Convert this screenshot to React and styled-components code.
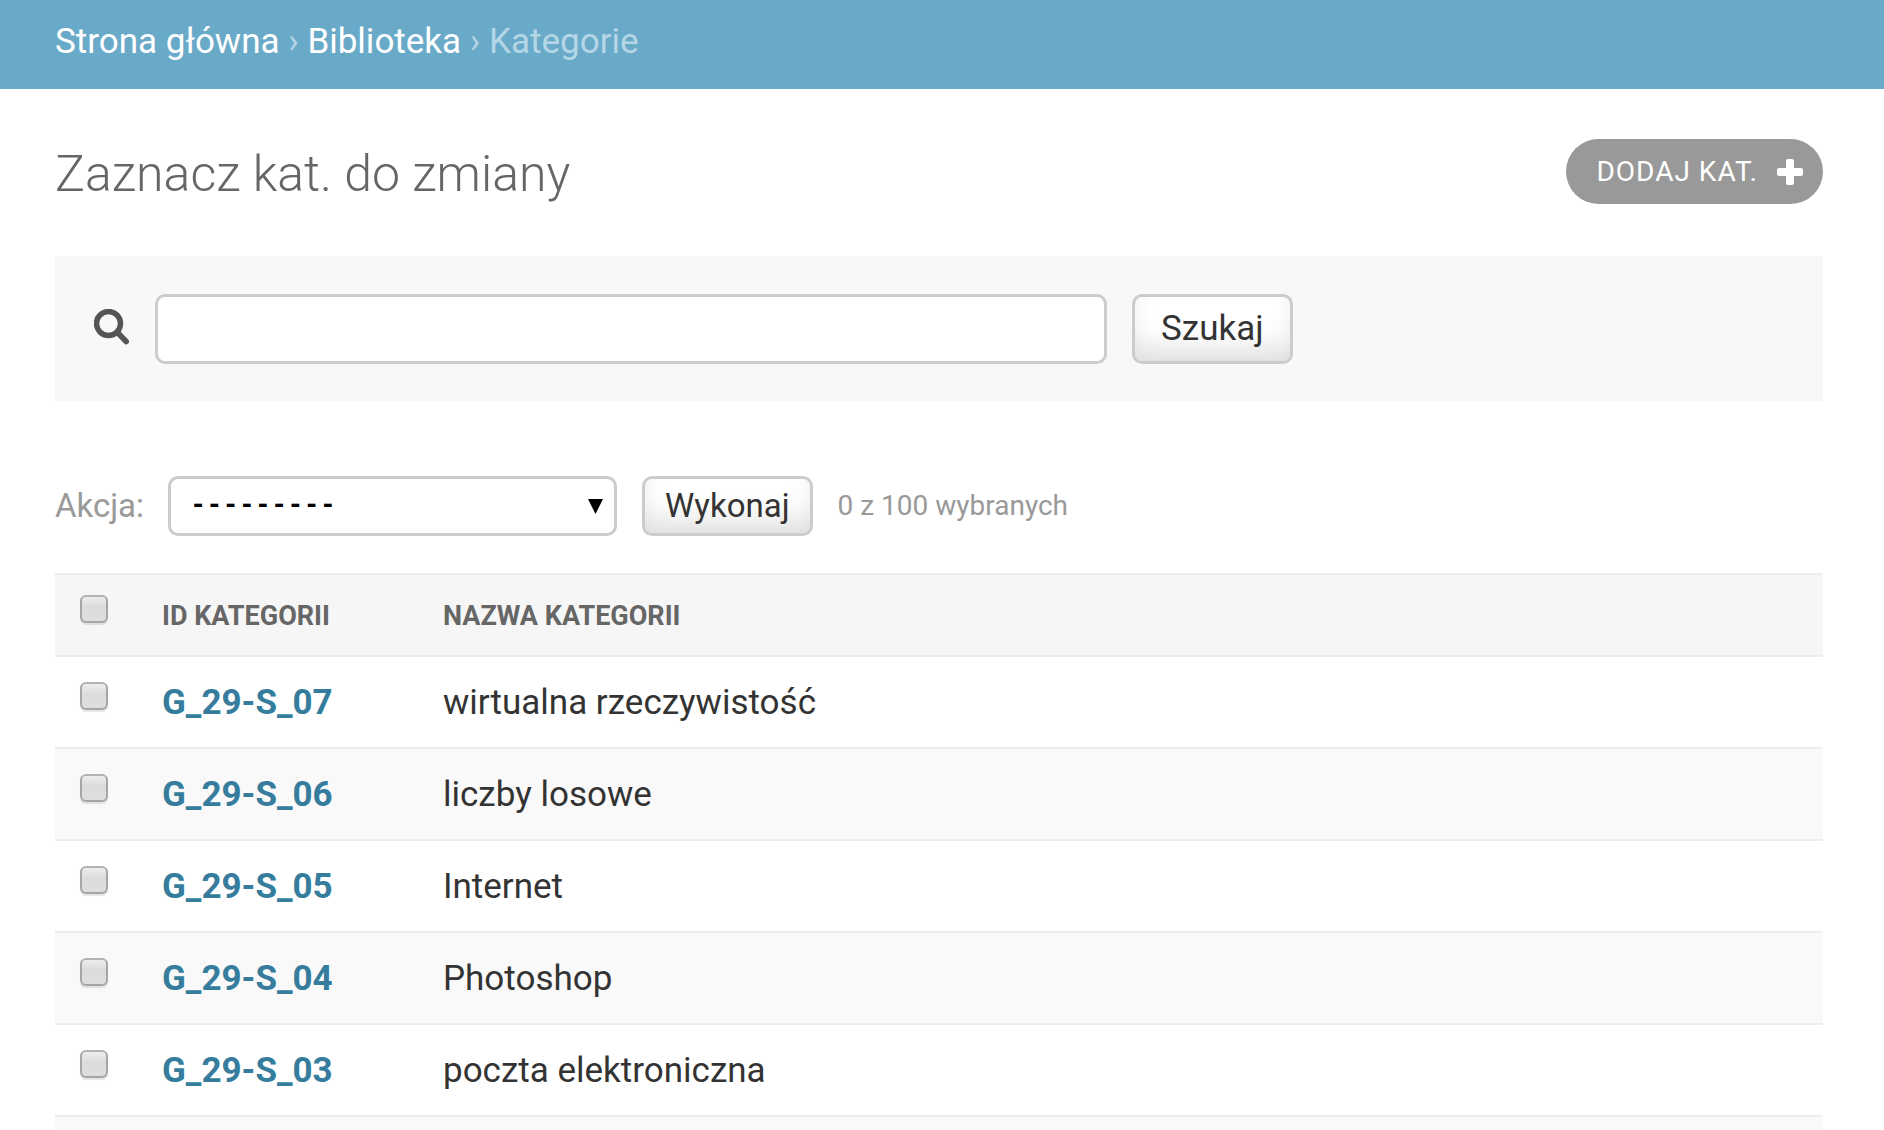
import React from 'react';
import styled, { createGlobalStyle, css } from 'styled-components';

const Global = createGlobalStyle`
  *, *::before, *::after { box-sizing: border-box; }
  body {
    margin: 0;
    background: #fff;
    color: #333;
    font-family: Roboto, "Liberation Sans", sans-serif;
    font-size: 35px;
    line-height: 42px;
  }
  button, input, select { font: inherit; }
`;

const Page = styled.div`
  height: 100vh;
  overflow: hidden;
`;

const Breadcrumbs = styled.nav`
  padding: 21px 55px 26px;
  background: #6aaac9;
  color: #b5d6e6;
  white-space: nowrap;
`;

const Crumb = styled.a`
  color: #fff;
  text-decoration: none;
`;

const Content = styled.main`
  padding: 50px 61px 0 55px;
`;

const TitleRow = styled.header`
  display: flex;
  justify-content: space-between;
  align-items: flex-start;
  margin-bottom: 47px;
`;

const Title = styled.h1`
  margin: 0;
  color: #666;
  font-size: 50px;
  font-weight: 300;
  line-height: 70px;
`;

const AddLink = styled.a`
  display: flex;
  align-items: center;
  gap: 19px;
  height: 65px;
  padding: 0 20px 0 30px;
  border-radius: 33px;
  background: #999;
  color: #fff;
  font-size: 28px;
  letter-spacing: 1px;
  text-decoration: none;
  text-transform: uppercase;
`;

const Toolbar = styled.form`
  display: flex;
  align-items: center;
  padding: 38px 39px 37px;
  background: #f8f8f8;
`;

const SearchLabel = styled.label`
  display: flex;
  margin-right: 26px;
`;

const boxed = css`
  border: 3px solid #ccc;
  border-radius: 10px;
`;

const SearchInput = styled.input`
  ${boxed}
  width: 952px;
  height: 70px;
  padding: 0 16px;
  background: #fff;
`;

const Button = styled.button`
  ${boxed}
  height: ${(p) => (p.$tall ? 70 : 60)}px;
  margin-left: 25px;
  padding: 0 ${(p) => (p.$tall ? 26 : 20)}px;
  background: #fff;
  box-shadow: inset 0 -20px 30px -10px rgba(0, 0, 0, 0.15);
  color: #333;
  font-size: ${(p) => (p.$tall ? 35 : 33)}px;
`;

const Actions = styled.form`
  display: flex;
  align-items: center;
  padding: 75px 0 37px;
`;

const ActionLabel = styled.label`
  color: #999;
  font-size: 33px;
`;

const SelectWrap = styled.div`
  position: relative;
  margin-left: 24px;
`;

const Select = styled.select`
  ${boxed}
  display: block;
  appearance: none;
  width: 449px;
  height: 60px;
  padding: 0 40px 0 19px;
  background: #fff;
  color: #000;
  font-family: "Liberation Mono", monospace;
  font-size: 27px;
  font-weight: 700;
`;

const Arrow = styled.svg`
  position: absolute;
  top: 23px;
  right: 14px;
  pointer-events: none;
`;

const Counter = styled.span`
  margin-left: 25px;
  color: #999;
  font-size: 28px;
`;

const Table = styled.table`
  width: 100%;
  border-collapse: collapse;
  border-top: 2px solid #ededed;
`;

const HeadCell = styled.th`
  height: 82px;
  padding: 2px 20px 0 0;
  border-bottom: 2px solid #ededed;
  background: #f6f6f6;
  color: #666;
  font-size: 27px;
  font-weight: 700;
  text-align: left;
  text-transform: uppercase;
  width: ${(p) => p.$width || 'auto'};
`;

const Row = styled.tr`
  background: #fff;
  &:nth-child(even) { background: #f9f9f9; }
`;

const Cell = styled.td`
  height: 92px;
  padding: 2px 20px 0 0;
  border-bottom: 2px solid #ededed;
`;

const IdCell = styled(Cell).attrs({ as: 'th', scope: 'row' })`
  font-weight: 700;
  text-align: left;
`;

const IdLink = styled.a`
  color: #357c9d;
  text-decoration: none;
`;

const Checkbox = styled.input.attrs({ type: 'checkbox' })`
  display: block;
  appearance: none;
  width: 28px;
  height: 28px;
  margin: 0 0 14px 25px;
  border: 2px solid #a6a6a6;
  border-top-color: #b2b2b2;
  border-radius: 6px;
  background: linear-gradient(#ededed, #dcdcdc 40%, #dedede);
  box-shadow: 0 2px 1px rgba(0, 0, 0, 0.1);
`;

const rows = [
  ['G_29-S_07', 'wirtualna rzeczywistość'],
  ['G_29-S_06', 'liczby losowe'],
  ['G_29-S_05', 'Internet'],
  ['G_29-S_04', 'Photoshop'],
  ['G_29-S_03', 'poczta elektroniczna'],
];

export default function App() {
  return (
    <Page>
      <Global />
      <Breadcrumbs>
        <Crumb href="#home">Strona główna</Crumb> › <Crumb href="#library">Biblioteka</Crumb> › Kategorie
      </Breadcrumbs>
      <Content>
        <TitleRow>
          <Title>Zaznacz kat. do zmiany</Title>
          <AddLink href="#add">
            Dodaj kat.
            <svg width="26" height="26" viewBox="0 0 26 26" aria-hidden="true">
              <rect x="9" y="0" width="8" height="26" rx="2" fill="#fff" />
              <rect x="0" y="9" width="26" height="8" rx="2" fill="#fff" />
            </svg>
          </AddLink>
        </TitleRow>
        <Toolbar onSubmit={(e) => e.preventDefault()}>
          <SearchLabel htmlFor="search" aria-label="Szukaj">
            <svg width="35" height="40" viewBox="0 0 35 40" fill="none" stroke="#555">
              <circle cx="14.5" cy="14.5" r="12" strokeWidth="5.5" />
              <path d="M23.500 23.500l8.700 9" strokeWidth="5.500" strokeLinecap="round" />
            </svg>
          </SearchLabel>
          <SearchInput id="search" type="text" />
          <Button $tall type="submit">Szukaj</Button>
        </Toolbar>
        <Actions onSubmit={(e) => e.preventDefault()}>
          <ActionLabel htmlFor="action">Akcja:</ActionLabel>
          <SelectWrap>
            <Select id="action" defaultValue="">
              <option value="">---------</option>
            </Select>
            <Arrow width="15" height="15" viewBox="0 0 15 15" aria-hidden="true">
              <path d="M0 0h15L7.500 15z" fill="#000" />
            </Arrow>
          </SelectWrap>
          <Button type="submit">Wykonaj</Button>
          <Counter>0 z 100 wybranych</Counter>
        </Actions>
        <Table>
          <thead>
            <tr>
              <HeadCell $width="107px"><Checkbox aria-label="Zaznacz wszystko" /></HeadCell>
              <HeadCell $width="281px" scope="col">ID kategorii</HeadCell>
              <HeadCell scope="col">Nazwa kategorii</HeadCell>
            </tr>
          </thead>
          <tbody>
            {rows.map(([id, name]) => (
              <Row key={id}>
                <Cell><Checkbox aria-label={id} /></Cell>
                <IdCell><IdLink href={`#${id}`}>{id}</IdLink></IdCell>
                <Cell>{name}</Cell>
              </Row>
            ))}
            <Row>
              <Cell colSpan={3} />
            </Row>
          </tbody>
        </Table>
      </Content>
    </Page>
  );
}
